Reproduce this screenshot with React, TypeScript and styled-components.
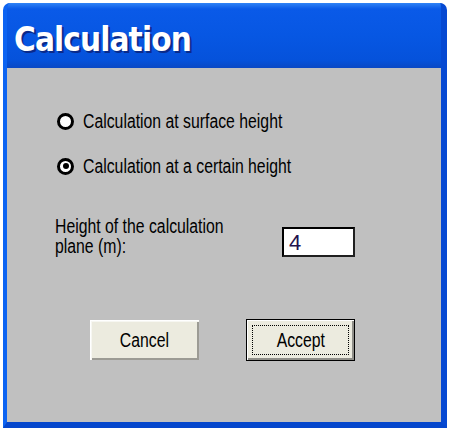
import React, { useState } from 'react';
import styled, { createGlobalStyle } from 'styled-components';

const GlobalStyle = createGlobalStyle`
  html, body {
    margin: 0;
    padding: 0;
    background: #ffffff;
  }
`;

const uiFont = `"Liberation Sans", Arial, sans-serif`;

const Window = styled.div`
  margin: 3px 0 0 3px;
  width: 444px;
  height: 425px;
  box-sizing: border-box;
  display: flex;
  flex-direction: column;
  background: #0a5ae6;
  border-radius: 7px 7px 0 0;
  border-left: 4px solid #0c63f2;
  border-right: 6px solid #0649d2;
  border-bottom: 6px solid #0546cc;
  overflow: hidden;
`;

const TitleBar = styled.div`
  height: 65px;
  flex: none;
  box-sizing: border-box;
  display: flex;
  align-items: center;
  padding: 7px 0 0 7px;
  background: linear-gradient(
    to bottom,
    #2f83f6 0px,
    #0a5ae8 6px,
    #0757e3 50%,
    #0552db 88%,
    #0a48c4 100%
  );
`;

const Title = styled.h1`
  margin: 0;
  font-family: "DejaVu Sans Condensed", "DejaVu Sans", sans-serif;
  font-weight: bold;
  font-size: 33px;
  color: #ffffff;
  letter-spacing: -0.9px;
  text-shadow: 2px 2px 0 #0a2a8a;
`;

const Body = styled.div`
  flex: 1;
  background: #c0c0c0;
  padding: 41px 0 0 48px;
  display: flex;
  flex-direction: column;
  font-family: ${uiFont};
  font-size: 19.5px;
  color: #000000;
`;

// the dialog text is a narrow sans; squeeze Liberation Sans to match
const Narrow = styled.span<{ $center?: boolean }>`
  display: inline-block;
  white-space: nowrap;
  transform: scaleX(0.81);
  transform-origin: ${({ $center }) => ($center ? 'center' : 'left')} center;
`;

const RadioGroup = styled.div`
  display: flex;
  flex-direction: column;
  gap: 21px;
  margin-left: 2px;
`;

const RadioRow = styled.label`
  height: 24px;
  display: flex;
  align-items: center;
  gap: 9px;
  cursor: pointer;
`;

const RadioCircle = styled.span<{ $checked: boolean }>`
  width: 17px;
  height: 17px;
  flex: none;
  box-sizing: border-box;
  border-radius: 50%;
  border: 3px solid #000000;
  background: #ffffff;
  display: flex;
  align-items: center;
  justify-content: center;

  &::after {
    content: '';
    width: 6px;
    height: 6px;
    border-radius: 50%;
    background: #000000;
    display: ${({ $checked }) => ($checked ? 'block' : 'none')};
  }
`;

const HeightRow = styled.div`
  display: flex;
  align-items: flex-start;
  margin-top: 38px;
`;

const HeightLabel = styled.div`
  width: 227px;
  line-height: 20px;
  display: flex;
  flex-direction: column;
`;

const HeightInput = styled.input`
  margin-top: 11px;
  width: 73px;
  height: 30px;
  box-sizing: border-box;
  border: 2px solid #000000;
  border-right-color: #202020;
  border-bottom-color: #202020;
  background: #ffffff;
  padding: 1px 0 0 5px;
  font-family: ${uiFont};
  font-size: 22px;
  color: #24124e;
  outline: none;
`;

const ButtonRow = styled.div`
  display: flex;
  align-items: center;
  gap: 47px;
  margin: 62px 0 0 35px;
`;

const Button = styled.button<{ $default?: boolean }>`
  position: relative;
  width: 109px;
  height: ${({ $default }) => ($default ? '42px' : '40px')};
  box-sizing: border-box;
  background: #ecebdf;
  font-family: ${uiFont};
  font-size: 19.5px;
  color: #000000;
  padding: 0;
  cursor: pointer;
  border: ${({ $default }) => ($default ? '1px solid #000000' : 'none')};
  box-shadow: ${({ $default }) =>
    $default
      ? 'inset 1px 1px 0 #ffffff, inset -2px -2px 0 #8f8e88'
      : 'inset 1px 1px 0 #ffffff, inset 2px 2px 0 #f7f7f2, inset -2px -2px 0 #9c9b94'};

  &::after {
    content: '';
    display: ${({ $default }) => ($default ? 'block' : 'none')};
    position: absolute;
    inset: 5px;
    border: 1px dotted #000000;
  }
`;

export default function App() {
  const [mode, setMode] = useState<'surface' | 'height'>('height');
  const [height, setHeight] = useState('4');

  return (
    <>
      <GlobalStyle />
      <Window>
        <TitleBar>
          <Title>Calculation</Title>
        </TitleBar>
        <Body>
          <RadioGroup>
            <RadioRow onClick={() => setMode('surface')}>
              <RadioCircle $checked={mode === 'surface'} />
              <Narrow>Calculation at surface height</Narrow>
            </RadioRow>
            <RadioRow onClick={() => setMode('height')}>
              <RadioCircle $checked={mode === 'height'} />
              <Narrow>Calculation at a certain height</Narrow>
            </RadioRow>
          </RadioGroup>
          <HeightRow>
            <HeightLabel>
              <Narrow>Height of the calculation</Narrow>
              <Narrow>plane (m):</Narrow>
            </HeightLabel>
            <HeightInput value={height} onChange={(e) => setHeight(e.target.value)} />
          </HeightRow>
          <ButtonRow>
            <Button>
              <Narrow $center>Cancel</Narrow>
            </Button>
            <Button $default>
              <Narrow $center>Accept</Narrow>
            </Button>
          </ButtonRow>
        </Body>
      </Window>
    </>
  );
}
